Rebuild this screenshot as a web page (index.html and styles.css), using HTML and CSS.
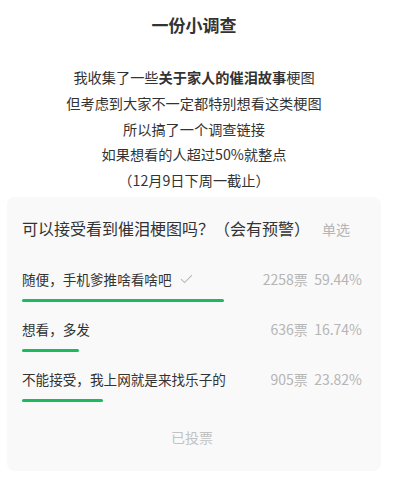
FILE: index.html
```html
<!DOCTYPE html>
<html lang="zh-CN">
<head>
  <meta charset="UTF-8">
  <title>一份小调查</title>
  <link rel="stylesheet" href="styles.css">
</head>
<body>
  <div class="page">
    <h1 class="title">一份小调查</h1>
    <div class="intro">
      <p>我收集了一些<strong>关于家人的催泪故事</strong>梗图</p>
      <p>但考虑到大家不一定都特别想看这类梗图</p>
      <p>所以搞了一个调查链接</p>
      <p>如果想看的人超过50%就整点</p>
      <p>（12月9日下周一截止）</p>
    </div>

    <div class="vote-card">
      <div class="question">
        <span class="question-text">可以接受看到催泪梗图吗？（会有预警）</span>
        <span class="question-type">单选</span>
      </div>

      <div class="options">
        <div class="option">
          <div class="option-row">
            <span class="option-label">随便，手机爹推啥看啥吧
              <svg class="check" width="13" height="10" viewBox="0 0 13 10"><path d="M1 5.2 L4.6 8.6 L12 1.2" fill="none" stroke="#b8b8b8" stroke-width="1.1"/></svg>
            </span>
            <span class="option-count">2258票&nbsp;&nbsp;59.44%</span>
          </div>
          <div class="bar" style="width: 59.44%"></div>
        </div>

        <div class="option">
          <div class="option-row">
            <span class="option-label">想看，多发</span>
            <span class="option-count">636票&nbsp;&nbsp;16.74%</span>
          </div>
          <div class="bar" style="width: 16.74%"></div>
        </div>

        <div class="option">
          <div class="option-row">
            <span class="option-label">不能接受，我上网就是来找乐子的</span>
            <span class="option-count">905票&nbsp;&nbsp;23.82%</span>
          </div>
          <div class="bar" style="width: 23.82%"></div>
        </div>
      </div>

      <div class="voted">已投票</div>
    </div>
  </div>
</body>
</html>
```

FILE: styles.css
```css
body {
  margin: 0;
  font-family: "Noto Sans CJK SC", "Noto Sans", sans-serif;
  color: #333;
  background: #fff;
}
.page {
  width: 374px;
  margin-left: 7px;
}
.title {
  margin: 13px 0 0;
  font-size: 17px;
  line-height: 24px;
  font-weight: bold;
  text-align: center;
}
.intro {
  margin-top: 28px;
  text-align: center;
  font-size: 14.2px;
  line-height: 25.75px;
}
.intro p {
  margin: 0;
}
.intro strong {
  font-weight: bold;
}
.vote-card {
  margin-top: 3px;
  background: #f9f9f9;
  border-radius: 8px;
  padding: 19px 19px 24px 15px;
}
.question {
  display: flex;
  align-items: baseline;
  line-height: 24px;
}
.question-text {
  font-size: 16px;
}
.question-type {
  margin-left: 12px;
  font-size: 14px;
  color: #b5b5b5;
}
.options {
  display: flex;
  flex-direction: column;
  gap: 17px;
  margin-top: 28px;
}
.option-row {
  display: flex;
  justify-content: space-between;
  align-items: center;
  line-height: 20px;
}
.option-label {
  font-size: 13.6px;
  display: flex;
  align-items: center;
}
.check {
  margin-left: 8px;
}
.option-count {
  font-size: 14px;
  color: #b5b5b5;
}
.bar {
  margin-top: 10px;
  height: 3px;
  background: #1bb960;
  border-radius: 2px;
}
.voted {
  margin-top: 25px;
  text-align: center;
  font-size: 14px;
  line-height: 20px;
  color: #c2c2c2;
}
```
